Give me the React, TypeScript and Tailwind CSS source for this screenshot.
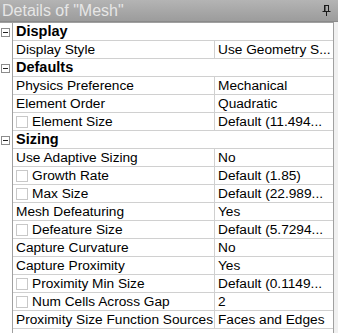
import type { ReactNode } from 'react';

type Row =
  | { kind: 'group'; label: string }
  | { kind: 'prop'; label: string; value: string; check?: boolean };

const rows: Row[] = [
  { kind: 'group', label: 'Display' },
  { kind: 'prop', label: 'Display Style', value: 'Use Geometry S...' },
  { kind: 'group', label: 'Defaults' },
  { kind: 'prop', label: 'Physics Preference', value: 'Mechanical' },
  { kind: 'prop', label: 'Element Order', value: 'Quadratic' },
  { kind: 'prop', label: 'Element Size', value: 'Default (11.494...', check: true },
  { kind: 'group', label: 'Sizing' },
  { kind: 'prop', label: 'Use Adaptive Sizing', value: 'No' },
  { kind: 'prop', label: 'Growth Rate', value: 'Default (1.85)', check: true },
  { kind: 'prop', label: 'Max Size', value: 'Default (22.989...', check: true },
  { kind: 'prop', label: 'Mesh Defeaturing', value: 'Yes' },
  { kind: 'prop', label: 'Defeature Size', value: 'Default (5.7294...', check: true },
  { kind: 'prop', label: 'Capture Curvature', value: 'No' },
  { kind: 'prop', label: 'Capture Proximity', value: 'Yes' },
  { kind: 'prop', label: 'Proximity Min Size', value: 'Default (0.1149...', check: true },
  { kind: 'prop', label: 'Num Cells Across Gap', value: '2', check: true },
  { kind: 'prop', label: 'Proximity Size Function Sources', value: 'Faces and Edges' },
];

const PinIcon = () => (
  <svg width="9" height="11" viewBox="0 0 9 11" className="text-[#1a1a1a]">
    <path d="M2 0.5h5M2.5 1v5M6.5 1v5M0.5 6.5h8M4.5 7v4M3 1v5" stroke="currentColor" strokeWidth="1" fill="none" />
  </svg>
);

const CollapseBox = () => (
  <div className="flex h-[9px] w-[9px] items-center justify-center border border-[#8c8c8c] bg-white">
    <div className="h-px w-[5px] bg-[#222]" />
  </div>
);

const Gutter = ({ children }: { children?: ReactNode }) => (
  <div className="flex w-[13px] shrink-0 items-center justify-center border-r border-[#a0a0a0] bg-white pr-[1px]">
    {children}
  </div>
);

const PropertyRow = ({ row }: { row: Row }) => {
  if (row.kind === 'group') {
    return (
      <div className="flex h-[18px]">
        <Gutter>
          <CollapseBox />
        </Gutter>
        <div className="flex flex-1 items-center border-b border-[#d0d0d0] pl-[3px] text-[14.5px] font-bold text-black">
          {row.label}
        </div>
      </div>
    );
  }

  return (
    <div className="flex h-[18px]">
      <Gutter />
      <div className="flex w-[202px] shrink-0 items-center gap-[4px] overflow-hidden whitespace-nowrap border-r border-b border-[#d0d0d0] pl-[3px]">
        {row.check && <div className="h-[12px] w-[12px] shrink-0 border border-[#c8c8c8] bg-white" />}
        <span>{row.label}</span>
      </div>
      <div className="flex flex-1 items-center overflow-hidden whitespace-nowrap border-b border-[#d0d0d0] pl-[3px]">
        {row.value}
      </div>
    </div>
  );
};

const App = () => {
  return (
    <div
      className="h-[333px] w-[338px] overflow-hidden bg-[#f0f0f0] text-[13.7px] leading-none text-black"
      style={{ fontFamily: '"Liberation Sans", Arial, sans-serif' }}
    >
      <div className="flex h-[22px] items-center justify-between border-b border-[#8a8a8a] bg-gradient-to-b from-[#b4b4b4] to-[#9c9c9c] pl-[2px] pr-[7px]">
        <span className="text-[16px] text-[#e6e6e6]">Details of "Mesh"</span>
        <PinIcon />
      </div>
      <div className="mr-[4px] border-t border-r border-[#a0a0a0] bg-white">
        {rows.map((row) => (
          <PropertyRow key={row.label} row={row} />
        ))}
        <div className="flex h-[18px]">
          <Gutter />
          <div className="flex-1" />
        </div>
      </div>
    </div>
  );
};

export default App;
